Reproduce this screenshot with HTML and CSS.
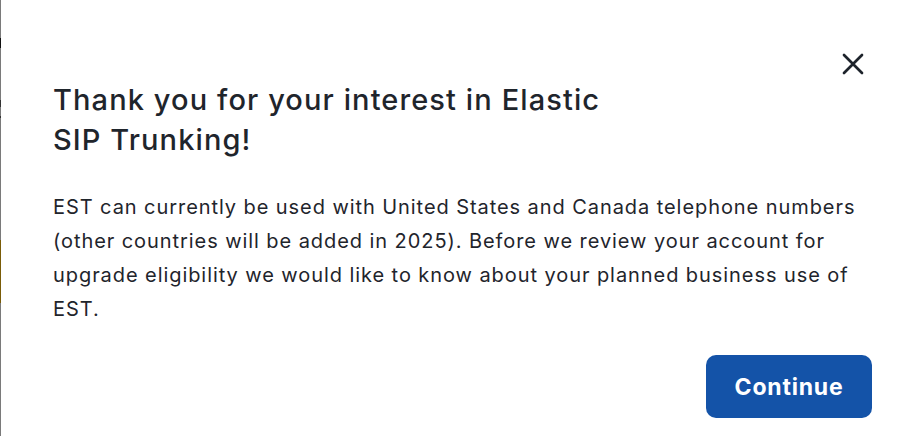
FILE: index.html
```html
<!DOCTYPE html>
<html lang="en">
<head>
<meta charset="utf-8">
<title>Elastic SIP Trunking</title>
<link rel="stylesheet" href="styles.css">
</head>
<body>
<div class="page">
  <div class="edge"></div>
  <div class="modal" role="dialog" aria-labelledby="modal-title">
    <button class="close" aria-label="Close">
      <svg width="22" height="22" viewBox="0 0 22 22" aria-hidden="true">
        <path d="M2 2 L20 20 M20 2 L2 20" stroke="#1d232b" stroke-width="2.7" stroke-linecap="round" fill="none"/>
      </svg>
    </button>
    <h2 class="title" id="modal-title">Thank you for your interest in Elastic SIP Trunking!</h2>
    <p class="text">EST can currently be used with United States and Canada telephone numbers (other countries will be added in 2025). Before we review your account for upgrade eligibility we would like to know about your planned business use of EST.</p>
    <div class="actions">
      <button class="primary">Continue</button>
    </div>
  </div>
</div>
</body>
</html>
```

FILE: styles.css
```css
html, body {
  margin: 0;
  padding: 0;
  background: #ffffff;
}

.page {
  display: flex;
  width: 914px;
  height: 436px;
  overflow: hidden;
}

.edge {
  flex: 0 0 1px;
  background: linear-gradient(to bottom,
    #7a7a7a 0 38px,
    #111111 38px 48px,
    #7a7a7a 48px 100px,
    #333333 100px 107px,
    #7a7a7a 107px 116px,
    #333333 116px 118px,
    #7a7a7a 118px 240px,
    #7a5c08 240px 303px,
    #7a7a7a 303px 100%);
}

.modal {
  position: relative;
  flex: 1;
  padding: 80px 42px 0 52px;
  font-family: Inter, "Open Sans", "Liberation Sans", sans-serif;
  color: #1f252c;
}

.close {
  position: absolute;
  top: 53px;
  right: 50px;
  width: 22px;
  height: 22px;
  padding: 0;
  border: 0;
  background: transparent;
  cursor: pointer;
  display: flex;
}

.title {
  margin: 0;
  max-width: 590px;
  font-size: 29px;
  line-height: 40px;
  font-weight: 500;
  letter-spacing: 1.1px;
}

.text {
  margin: 30px 0 0;
  font-size: 20px;
  line-height: 34px;
  font-weight: 400;
  letter-spacing: 0.93px;
}

.actions {
  display: flex;
  justify-content: flex-end;
  margin-top: 29px;
}

.primary {
  width: 166px;
  height: 63px;
  border: 0;
  border-radius: 10px;
  background: #1453a8;
  color: #ffffff;
  font-family: Inter, "Open Sans", "Liberation Sans", sans-serif;
  font-size: 23px;
  font-weight: 700;
  letter-spacing: 0.8px;
  cursor: pointer;
}
```
